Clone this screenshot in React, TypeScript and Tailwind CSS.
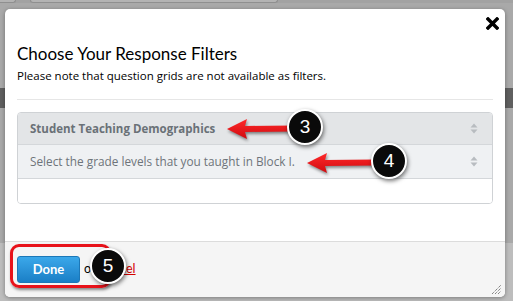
import React from 'react';

const SortIcon: React.FC = () => (
  <svg width="8" height="11" viewBox="0 0 8 11" className="shrink-0">
    <path d="M4 0.5 L7.5 4.5 L0.5 4.5 Z" fill="#b8bcc0" />
    <path d="M4 10.5 L7.5 6.5 L0.5 6.5 Z" fill="#b8bcc0" />
  </svg>
);

const Arrow: React.FC<{ className: string }> = ({ className }) => (
  <svg
    width="70"
    height="24"
    viewBox="0 0 70 24"
    className={`absolute drop-shadow-[1px_2px_1.5px_rgba(0,0,0,0.45)] ${className}`}
  >
    <defs>
      <linearGradient id="arrowRed" x1="0" y1="0" x2="0" y2="1">
        <stop offset="0" stopColor="#ff2a2a" />
        <stop offset="1" stopColor="#d00a0f" />
      </linearGradient>
    </defs>
    <path d="M1 12 L21 2 L19 9 L70 8.5 L70 14.5 L19 15 L21 22 Z" fill="url(#arrowRed)" />
  </svg>
);

const Badge: React.FC<{ n: string; className: string }> = ({ n, className }) => (
  <div
    className={`absolute flex h-[36px] w-[36px] items-center justify-center rounded-full border-[2.5px] border-white bg-[#0a0a0a] text-[19px] text-white shadow-[1px_2px_4px_rgba(0,0,0,0.55)] font-['Liberation_Sans',Arial,sans-serif] ${className}`}
  >
    {n}
  </div>
);

const App: React.FC = () => {
  return (
    <div className="relative h-[301px] w-[513px] overflow-hidden bg-[#a8a8a8] font-['Open_Sans','Lato',sans-serif]">
      {/* page behind the dialog */}
      <div className="flex h-[301px] flex-col">
        <div className="flex h-[3px] gap-[14px] bg-[#a2a2a2]">
          <div className="h-[3px] w-[16px] rounded-br-[3px] border-b border-r border-[#8f8f8f] bg-[#b3b3b3]" />
          <div className="h-[3px] w-[248px] rounded-b-[3px] border-x border-b border-[#8f8f8f] bg-[#b3b3b3]" />
        </div>
        <div className="h-[85px] bg-[#a9a9a9]" />
        <div className="h-[20px] bg-[#5f5f5f]" />
        <div className="h-[135px] bg-[#a9a9a9]" />
        <div className="flex-1 bg-[#bdbdbd]" />
      </div>

      {/* dialog */}
      <div className="absolute left-[5px] top-[9px] flex h-[288px] w-[500px] flex-col overflow-hidden rounded-[5px] bg-white shadow-[0_1px_4px_rgba(0,0,0,0.35)]">
        <div className="flex justify-end pr-[6px] pt-[8px]">
          <svg width="13" height="13" viewBox="0 0 13 13">
            <path d="M2 2 L11 11 M11 2 L2 11" stroke="#000" strokeWidth="3.4" strokeLinecap="square" />
          </svg>
        </div>

        <div className="px-[12px]">
          <h2 className="mt-[13px] font-['Lato',sans-serif] text-[17px] leading-[22px] text-black">
            Choose Your Response Filters
          </h2>
          <p className="mt-[4px] text-[11.5px] leading-[14px] text-black">
            Please note that question grids are not available as filters.
          </p>
          <div className="mt-[16px] h-px bg-[#e6e6e6]" />

          <div className="mt-[12px] overflow-hidden rounded-[4px] border border-[#cfd2d5]">
            <div className="flex h-[32px] items-center justify-between border-b border-[#d4d7da] bg-[#e3e5e7] pl-[12px] pr-[14px]">
              <span className="text-[11.5px] font-bold text-[#6a7177]">Student Teaching Demographics</span>
              <SortIcon />
            </div>
            <div className="flex h-[34px] items-center justify-between border-b border-[#d4d7da] bg-[#eff1f3] pl-[12px] pr-[14px]">
              <span className="text-[11.8px] text-[#6e747a]">Select the grade levels that you taught in Block I.</span>
              <SortIcon />
            </div>
            <div className="h-[24px] bg-white" />
          </div>
        </div>

        <div className="mt-auto flex h-[56px] items-center gap-[4px] border-t border-[#dcdcdc] bg-[#f5f5f5] pl-[12px]">
          <button className="h-[27px] w-[63px] rounded-[3px] border border-[#1c78b8] bg-linear-to-b from-[#3ba8ea] to-[#1a7fc6] font-['Lato',sans-serif] text-[13px] font-bold text-white">
            Done
          </button>
          <span className="font-['Lato',sans-serif] text-[12.5px] text-black">
            or <span className="text-[#d40000] underline">Cancel</span>
          </span>
          <div className="ml-auto mr-[3px] mt-auto mb-[2px]">
            <svg width="11" height="11" viewBox="0 0 11 11">
              <path d="M1 10 L10 1 M4 10 L10 4 M7 10 L10 7" stroke="#555" strokeWidth="1" strokeDasharray="1 1" />
            </svg>
          </div>
        </div>
      </div>

      {/* annotations */}
      <Arrow className="left-[226px] top-[117px]" />
      <Badge n="3" className="left-[287px] top-[109px]" />
      <Arrow className="left-[306px] top-[151px]" />
      <Badge n="4" className="left-[371px] top-[143px]" />

      <div className="absolute left-[10px] top-[244px] h-[44px] w-[101px] rounded-[9px] border-[3px] border-[#e8121a] shadow-[1px_2px_3px_rgba(0,0,0,0.45)]" />
      <Badge n="5" className="left-[90px] top-[248px]" />
    </div>
  );
};

export default App;
